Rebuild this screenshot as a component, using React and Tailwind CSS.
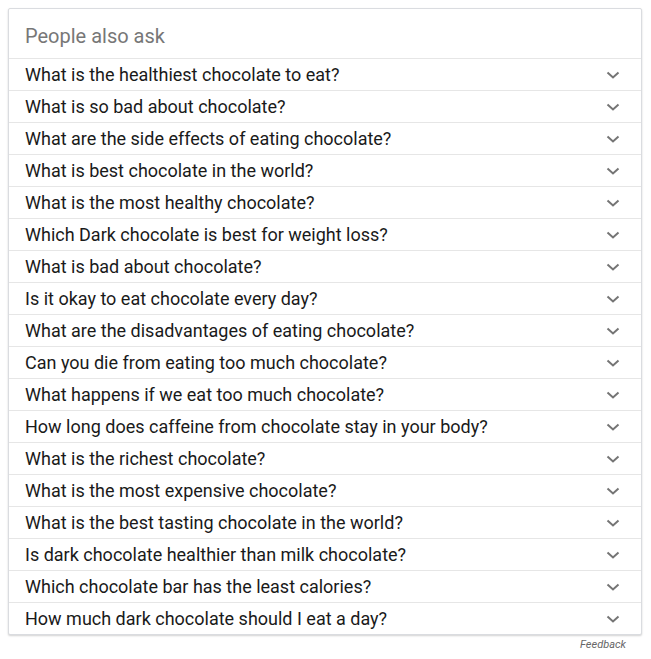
export default function App() {
  const qs = [
    "What is the healthiest chocolate to eat?",
    "What is so bad about chocolate?",
    "What are the side effects of eating chocolate?",
    "What is best chocolate in the world?",
    "What is the most healthy chocolate?",
    "Which Dark chocolate is best for weight loss?",
    "What is bad about chocolate?",
    "Is it okay to eat chocolate every day?",
    "What are the disadvantages of eating chocolate?",
    "Can you die from eating too much chocolate?",
    "What happens if we eat too much chocolate?",
    "How long does caffeine from chocolate stay in your body?",
    "What is the richest chocolate?",
    "What is the most expensive chocolate?",
    "What is the best tasting chocolate in the world?",
    "Is dark chocolate healthier than milk chocolate?",
    "Which chocolate bar has the least calories?",
    "How much dark chocolate should I eat a day?",
  ];
  return (
    <div className="w-[651px] h-[659px] bg-white pt-2 pl-2" style={{ fontFamily: "Roboto, Arial, sans-serif" }}>
      <div className="w-[634px] rounded-[2px] border border-[#dadce0] shadow-[0_1px_2px_rgba(0,0,0,0.18)] bg-white">
        <div className="h-[49px] pl-4 pt-[5px] flex items-center text-[20px] text-[#777]">People also ask</div>
        {qs.map((q) => (
          <div key={q} className="h-[32px] border-t border-[#e6e6e6] pl-4 pr-[21px] flex items-center justify-between text-[18px] text-[#1a1a1a]">
            <span>{q}</span>
            <svg width="14" height="9" viewBox="0 0 14 9" className="mt-[1px]">
              <path d="M1.5 1.5 L7 6.5 L12.5 1.5" fill="none" stroke="#757575" strokeWidth="2" />
            </svg>
          </div>
        ))}
      </div>
      <div className="w-[618px] text-right text-[11px] italic text-[#666] mt-[2px]">Feedback</div>
    </div>
  );
}
